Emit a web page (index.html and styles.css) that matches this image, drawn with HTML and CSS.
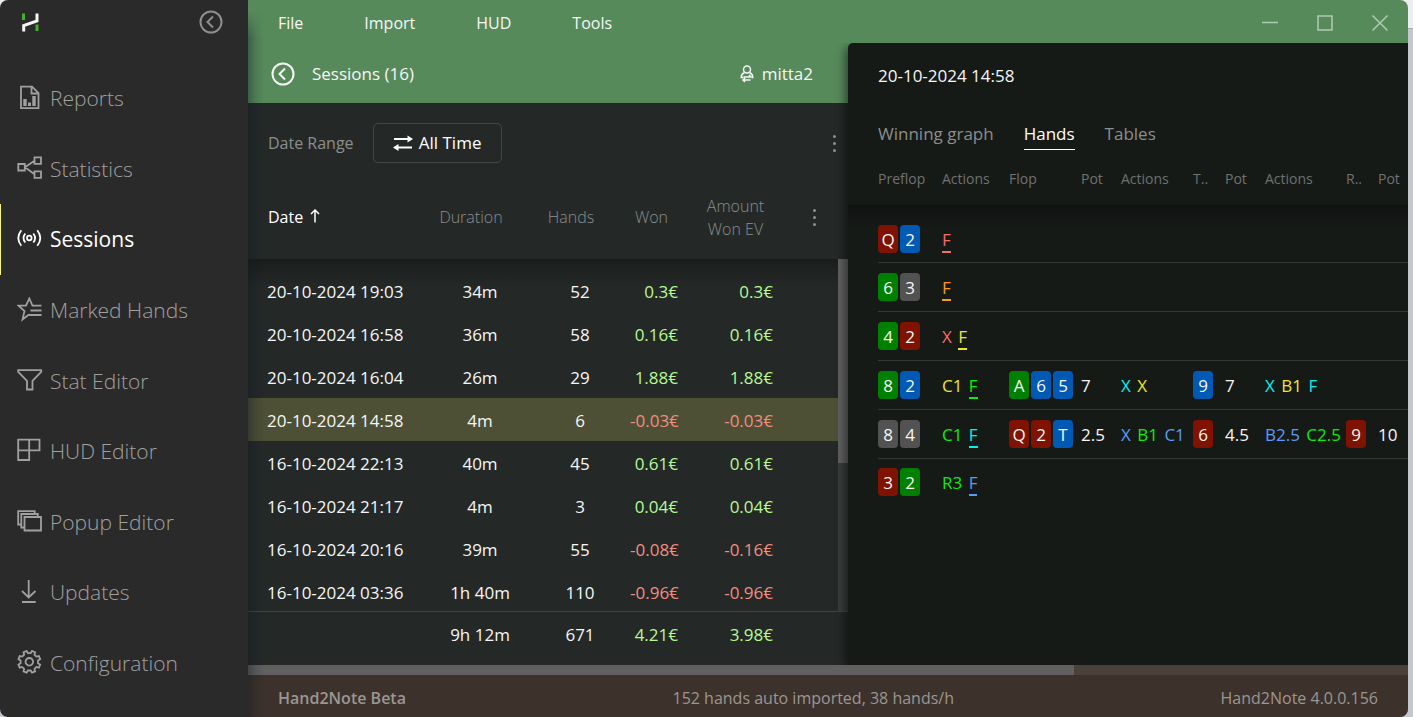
FILE: index.html
```html
<!DOCTYPE html>
<html lang="en">
<head>
<meta charset="utf-8">
<title>Hand2Note</title>
<link rel="stylesheet" href="styles.css">
</head>
<body>
<div class="app">
  <aside class="sidebar">
    <div class="brand">
      <svg class="logo" viewBox="0 0 26 26" aria-hidden="true">
        <path class="logo-green" d="M5.500 4.500v6.500M19 15.500v6.500"/>
        <path class="logo-white" d="M5.700 22.500V16.500L19 12V4.500"/>
      </svg>
      <button class="icon-btn" aria-label="Collapse menu">
        <svg class="circle-icon" viewBox="0 0 24 24"><circle cx="12" cy="12" r="10.500"/><path d="M14 6.500L8.500 12l5.500 5.500"/></svg>
      </button>
    </div>
    <nav class="nav">
      <a class="nav-item" href="#reports"><svg viewBox="0 0 26 26"><path d="M4 1.700h11l6.500 6.500V23.200H4zM14.500 2v6.500h7"/><path class="fill" d="M6.300 14h3.400v7H6.300zM11 17.500h3V21h-3zM15.300 11h3.400v10h-3.400z"/></svg>Reports</a>
      <a class="nav-item" href="#statistics"><svg viewBox="0 0 26 26"><path d="M1.300 8h6.500v6.500H1.300zM17.500 1.300H24v6.500h-6.500zM17.500 15.300H24v6.500h-6.500zM8 11.300l9.500-6.500M8 11.300l9.500 7"/></svg>Statistics</a>
      <a class="nav-item active" href="#sessions"><svg viewBox="0 0 26 26"><circle cx="12.300" cy="12" r="2.300"/><path d="M8.300 7.500q-3.600 4.500 0 9M16.300 7.500q3.600 4.500 0 9M4.300 4.200q-6 7.800 0 15.600M20.300 4.200q6 7.800 0 15.600"/></svg>Sessions</a>
      <a class="nav-item" href="#marked"><svg viewBox="0 0 26 26"><path d="M24.500 8.700h-9L12.300 1.500 9 8.700H1.500l6 5.300-2 8.500 6.500-5M13.500 13.500h11M12 18h12.500"/></svg>Marked Hands</a>
      <a class="nav-item" href="#stat-editor"><svg viewBox="0 0 26 26"><path d="M1.200 2.200h23v1.800l-8.700 8.800v8.700H10v-8.700L1.200 4z"/></svg>Stat Editor</a>
      <a class="nav-item" href="#hud-editor"><svg viewBox="0 0 26 26"><path d="M1.200 1.700H22.500v10.600H1.200zM1.200 12.300V22h11V1.700"/></svg>HUD Editor</a>
      <a class="nav-item" href="#popup-editor"><svg viewBox="0 0 26 26"><path d="M7.500 8h16.500v13.500H7.500zM7.500 18.500H4.300V5h16.500v3M4.300 15.500H1.200V2.200h16.500V5"/></svg>Popup Editor</a>
      <a class="nav-item" href="#updates"><svg viewBox="0 0 26 26"><path d="M11.700 1v17M5 12l6.700 6.500L18.500 12M5 23h13.700"/></svg>Updates</a>
      <a class="nav-item" href="#configuration"><svg viewBox="0 0 26 26"><g transform="translate(12.300 11.800)"><circle r="3.800"/><path d="M8.690 1.380L10.870 2.710 9.600 5.770 7.120 5.170 5.170 7.120 5.770 9.600 2.710 10.870 1.380 8.690H-1.380L-2.710 10.870-5.770 9.600-5.170 7.120-7.120 5.170-9.600 5.770-10.870 2.710-8.690 1.380V-1.380L-10.870-2.710-9.600-5.770-7.120-5.170-5.170-7.120-5.770-9.600-2.710-10.870-1.380-8.690H1.380L2.710-10.870 5.770-9.600 5.170-7.120 7.120-5.170 9.600-5.770 10.870-2.710 8.690-1.380z"/></g></svg>Configuration</a>
    </nav>
  </aside>

  <main class="main">
    <header class="titlebar">
      <button class="menu-btn">File</button>
      <button class="menu-btn">Import</button>
      <button class="menu-btn">HUD</button>
      <button class="menu-btn">Tools</button>
      <div class="window-controls">
        <button class="icon-btn" aria-label="Minimize"><svg viewBox="0 0 16 16"><path d="M0 7.500h16"/></svg></button>
        <button class="icon-btn" aria-label="Maximize"><svg viewBox="0 0 16 16"><path d="M1 1h14v14H1z"/></svg></button>
        <button class="icon-btn" aria-label="Close"><svg viewBox="0 0 16 16"><path d="M.5.5l15 15M15.500.5l-15 15"/></svg></button>
      </div>
    </header>

    <div class="workspace">
      <section class="sessions">
        <div class="subheader">
          <button class="icon-btn" aria-label="Back">
            <svg class="circle-icon" viewBox="0 0 24 24"><circle cx="12" cy="12" r="10.500"/><path d="M14 6.500L8.500 12l5.500 5.500"/></svg>
          </button>
          <h1 class="title">Sessions (16)</h1>
          <button class="player">
            <svg viewBox="0 0 14 18"><circle cx="7" cy="4.500" r="3.500"/><path d="M4.500 7.500Q1.200 9 1.200 12.500h2M9.500 7.500q3.300 1.500 3.300 5h-1.500M3.500 12h7.500M9 10l2 2M10.500 15H3M5 13l-2 2 2 2"/></svg>
            mitta2
          </button>
        </div>
        <div class="filters">
          <span class="filter-label">Date Range</span>
          <button class="range-btn">
            <svg viewBox="0 0 20 16"><path d="M1 4h15M4 12.500h15"/><path class="arrow" d="M14.500 0.500L20 4l-5.500 3.500zM5.500 9L0 12.500 5.500 16z"/></svg>
            All Time
          </button>
          <button class="dots" aria-label="Filter options"><i></i><i></i><i></i></button>
        </div>
        <table class="grid grid-head">
          <colgroup><col class="c-date"><col class="c-num"><col class="c-num"><col class="c-won"><col class="c-ev"><col></colgroup>
          <thead><tr>
            <th class="sorted">Date <svg viewBox="0 0 10 14"><path d="M5 13.500V1M1 5l4-4 4 4"/></svg></th>
            <th>Duration</th><th>Hands</th><th>Won</th><th>Amount<br>Won EV</th>
            <th><button class="dots" aria-label="Columns"><i></i><i></i><i></i></button></th>
          </tr></thead>
        </table>
        <div class="scroller">
          <table class="grid grid-body">
            <colgroup><col class="c-date"><col class="c-num"><col class="c-num"><col class="c-won"><col class="c-ev"><col></colgroup>
            <tbody>
              <tr><td>20-10-2024 19:03</td><td>34m</td><td>52</td><td class="pos">0.3€</td><td class="pos">0.3€</td><td></td></tr>
              <tr><td>20-10-2024 16:58</td><td>36m</td><td>58</td><td class="pos">0.16€</td><td class="pos">0.16€</td><td></td></tr>
              <tr><td>20-10-2024 16:04</td><td>26m</td><td>29</td><td class="pos">1.88€</td><td class="pos">1.88€</td><td></td></tr>
              <tr class="selected"><td>20-10-2024 14:58</td><td>4m</td><td>6</td><td class="neg">-0.03€</td><td class="neg">-0.03€</td><td></td></tr>
              <tr><td>16-10-2024 22:13</td><td>40m</td><td>45</td><td class="pos">0.61€</td><td class="pos">0.61€</td><td></td></tr>
              <tr><td>16-10-2024 21:17</td><td>4m</td><td>3</td><td class="pos">0.04€</td><td class="pos">0.04€</td><td></td></tr>
              <tr><td>16-10-2024 20:16</td><td>39m</td><td>55</td><td class="neg">-0.08€</td><td class="neg">-0.16€</td><td></td></tr>
              <tr><td>16-10-2024 03:36</td><td>1h 40m</td><td>110</td><td class="neg">-0.96€</td><td class="neg">-0.96€</td><td></td></tr>
            </tbody>
          </table>
          <div class="vbar"><div class="vthumb"></div></div>
        </div>
        <div class="totals">
          <table class="grid">
            <colgroup><col class="c-date"><col class="c-num"><col class="c-num"><col class="c-won"><col class="c-ev"><col></colgroup>
            <tbody><tr><td></td><td>9h 12m</td><td>671</td><td class="pos">4.21€</td><td class="pos">3.98€</td><td></td></tr></tbody>
          </table>
        </div>
      </section>

      <section class="detail">
        <h2 class="title">20-10-2024 14:58</h2>
        <div class="tabs">
          <button class="tab">Winning graph</button>
          <button class="tab current">Hands</button>
          <button class="tab">Tables</button>
        </div>
        <table class="hands hands-head">
          <colgroup><col class="h-pre"><col class="h-act"><col class="h-flop"><col class="h-pot"><col class="h-flop"><col class="h-card"><col class="h-pot"><col class="h-turn"><col class="h-card"><col></colgroup>
          <thead><tr><th>Preflop</th><th>Actions</th><th>Flop</th><th>Pot</th><th>Actions</th><th>T..</th><th>Pot</th><th>Actions</th><th>R..</th><th>Pot</th></tr></thead>
        </table>
        <div class="hands-list">
          <table class="hands hands-body">
            <colgroup><col class="h-pre"><col class="h-act"><col class="h-flop"><col class="h-pot"><col class="h-flop"><col class="h-card"><col class="h-pot"><col class="h-turn"><col class="h-card"><col></colgroup>
            <tbody>
              <tr><td><b class="card h">Q</b><b class="card d">2</b></td><td><u class="sb">F</u></td><td></td><td></td><td></td><td></td><td></td><td></td><td></td><td></td></tr>
              <tr><td><b class="card c">6</b><b class="card s">3</b></td><td><u class="ut">F</u></td><td></td><td></td><td></td><td></td><td></td><td></td><td></td><td></td></tr>
              <tr><td><b class="card c">4</b><b class="card h">2</b></td><td><span class="sb">X</span> <u class="mp">F</u></td><td></td><td></td><td></td><td></td><td></td><td></td><td></td><td></td></tr>
              <tr><td><b class="card c">8</b><b class="card d">2</b></td><td><span class="mp">C1</span> <u class="co">F</u></td><td><b class="card c">A</b><b class="card d">6</b><b class="card d">5</b></td><td>7</td><td><span class="bt">X</span> <span class="mp">X</span></td><td><b class="card d">9</b></td><td>7</td><td><span class="bt">X</span> <span class="mp">B1</span> <span class="bt">F</span></td><td></td><td></td></tr>
              <tr><td><b class="card s">8</b><b class="card s">4</b></td><td><span class="co">C1</span> <u class="bt">F</u></td><td><b class="card h">Q</b><b class="card h">2</b><b class="card d">T</b></td><td>2.5</td><td><span class="bb">X</span> <span class="co">B1</span> <span class="bb">C1</span></td><td><b class="card h">6</b></td><td>4.5</td><td><span class="bb">B2.5</span> <span class="co">C2.5</span></td><td><b class="card h">9</b></td><td>10</td></tr>
              <tr><td><b class="card h">3</b><b class="card c">2</b></td><td><span class="co">R3</span> <u class="bb">F</u></td><td></td><td></td><td></td><td></td><td></td><td></td><td></td><td></td></tr>
            </tbody>
          </table>
        </div>
      </section>
    </div>

    <div class="hbar"><div class="hthumb"></div></div>
    <footer class="status">
      <strong>Hand2Note Beta</strong>
      <span>152 hands auto imported, 38 hands/h</span>
      <span class="version">Hand2Note 4.0.0.156</span>
    </footer>
  </main>
</div>
</body>
</html>
```
FILE: styles.css
```css
* { box-sizing: border-box; }
body {
  margin: 0;
  padding-right: 5px;
  background: linear-gradient(#eceef2 28px, #aaa 28px, #aaa 29px, #c4c7cb 29px);
  font: 17px/22px "Open Sans", "Noto Sans", sans-serif;
  color: #f6f6f6;
}
button {
  margin: 0; padding: 0; border: 0; background: none;
  font: inherit; color: inherit; cursor: pointer;
}
svg { fill: none; stroke: currentColor; display: block; }
h1, h2 { margin: 0; font-size: 17px; font-weight: 400; }
.icon-btn { display: flex; }

.app {
  display: grid;
  grid-template-columns: 248px minmax(0, 1fr);
  grid-template-rows: minmax(0, 1fr);
  height: 100vh;
  border-radius: 8px;
  overflow: hidden;
}

/* Sidebar */
.sidebar {
  display: flex; flex-direction: column;
  padding-bottom: 19px;
  background: #2a2a2a;
  color: #8e8e8e;
}
.brand {
  display: flex; justify-content: space-between; align-items: center;
  height: 63px;
  padding: 0 25px 20px 18px;
}
.logo { width: 26px; height: 26px; stroke-width: 3; }
.logo-green { stroke: #42b02a; }
.logo-white { stroke: #f4f4f4; }
.circle-icon { width: 24px; height: 24px; stroke-width: 2; }
.nav { flex: 1; display: flex; flex-direction: column; }
.nav-item {
  flex: 1;
  display: flex; align-items: center; gap: 7px;
  padding-left: 16px;
  border-left: 1px solid transparent;
  color: #a0a0a0;
  font-size: 21px; font-weight: 300;
  text-decoration: none;
}
.nav-item svg { width: 26px; height: 26px; stroke-width: 1.800; }
.nav-item .fill { fill: currentColor; stroke: none; }
.nav-item.active { border-color: #f7f56a; color: #fff; font-weight: 400; }

/* Main column */
.main {
  position: relative;
  display: flex; flex-direction: column;
  background: #578a5b;
}
.main::before {
  content: ""; position: absolute; z-index: 2;
  left: 0; top: 10px; bottom: 0; width: 16px;
  background: linear-gradient(90deg, #10182460, #10182420 50%, #10182400);
  mask-image: linear-gradient(transparent, #000 28px);
  pointer-events: none;
}
.titlebar {
  display: flex; align-items: center; gap: 61px;
  height: 43px;
  padding: 2px 20px 0 30px;
  font-size: 16px;
}
.window-controls { display: flex; gap: 39px; margin-left: auto; color: #b0cbb2; }
.window-controls svg { width: 16px; height: 16px; stroke-width: 1.500; }
.workspace {
  flex: 1; min-height: 0;
  display: grid;
  grid-template-columns: 15fr 14fr;
  grid-template-rows: minmax(0, 1fr);
  background: linear-gradient(#578a5b 60px, #242928 60px);
}

/* Sessions */
.sessions { display: flex; flex-direction: column; min-width: 0; min-height: 0; background: #242928; }
.subheader {
  display: flex; align-items: center; gap: 17px;
  height: 60px;
  padding: 2px 35px 0 23px;
  background: #578a5b;
}
.player { display: flex; align-items: center; gap: 8px; margin-left: auto; }
.player svg { width: 14px; height: 18px; stroke-width: 1.500; }
.filters {
  display: flex; align-items: center; gap: 19px;
  height: 82px;
  padding: 0 10px 2px 20px;
}
.filter-label { color: #8b8e8c; font-size: 16px; }
.range-btn {
  display: flex; align-items: center; justify-content: center; gap: 6px;
  width: 129px; height: 40px;
  border: 1px solid #434846; border-radius: 5px;
  color: #fff;
}
.range-btn svg { width: 20px; height: 16px; stroke-width: 2; }
.range-btn .arrow { fill: currentColor; stroke: none; }
.dots { display: flex; flex-direction: column; gap: 4px; color: #8f9190; }
.dots i { width: 3px; height: 3px; border-radius: 50%; background: currentColor; }
.filters .dots { margin-left: auto; margin-right: 2px; }

.grid { width: calc(100% - 10px); table-layout: fixed; border-collapse: collapse; }
.c-date { width: 182px; }
.c-num { width: 100px; }
.c-won { width: 58px; }
.c-ev { width: 95px; }
.grid th { height: 74px; padding: 0 18px 9px 0; font-size: 16px; line-height: 23px; font-weight: 300; color: #8b8e8c; text-align: center; }
.grid th.sorted { padding-left: 20px; color: #fff; font-weight: 400; text-align: left; }
.sorted svg { display: inline; width: 10px; height: 14px; margin-left: 3px; stroke-width: 1.500; }
.grid th:nth-child(4) { text-align: right; padding-right: 20px; }
.grid th:nth-child(5) { padding-right: 0; }
.grid th:nth-child(6) { padding-left: 30px; }
.grid td { height: 43px; padding: 2px 0 0; text-align: center; white-space: nowrap; }
.grid td:first-child { padding-left: 19px; text-align: left; }
.grid td:nth-child(4), .grid td:nth-child(5) { padding-right: 10px; text-align: right; }
.pos { color: #b8f993; }
.neg { color: #f28d7f; }
.selected { background: #4d5035; }

.scroller {
  position: relative;
  flex: 1; min-height: 0;
  display: flex; align-items: flex-start;
  padding-top: 10px;
  background: linear-gradient(#1a1d1b, #242928 28px);
  overflow: hidden;
}
.vbar { position: absolute; top: 0; right: 0; bottom: 0; width: 10px; background: #383c3b; }
.vthumb { height: 58%; background: #5f6060; }
.totals { height: 54px; border-top: 1px solid #414645; }

/* Session detail */
.detail {
  z-index: 1;
  min-width: 0;
  padding-top: 22px;
  border-radius: 5px 0 0 5px;
  background: #161a17;
  box-shadow: -3px 4px 10px #00000080;
  overflow: hidden;
  clip-path: inset(0 0 0 -16px);
}
.detail .title { padding-left: 30px; }
.tabs { display: flex; gap: 30px; margin-top: 35px; padding-left: 30px; color: #8c8e8d; }
.tab { height: 28px; padding-bottom: 4px; border-bottom: 1px solid transparent; }
.tab.current { border-color: #fff; color: #fff; }
.hands { width: calc(100% - 30px); margin-left: 30px; table-layout: fixed; border-collapse: collapse; }
.h-pre { width: 64px; }
.h-act { width: 67px; }
.h-flop { width: 72px; }
.h-pot { width: 40px; }
.h-card { width: 32px; }
.h-turn { width: 81px; }
.hands th { height: 55px; padding: 2px 0 0; font-size: 14px; font-weight: 400; color: #6f7170; text-align: left; white-space: nowrap; }
.hands-list { padding-top: 10px; background: linear-gradient(#101211, #161a17 24px); }
.hands-body { height: 291px; }
.hands-body tr + tr { border-top: 1px solid #333735; }
.hands td { padding: 2px 0 0; white-space: nowrap; }
.hands td:has(.card) { padding: 0; }
.hands span + * { margin-left: 2px; }
.card {
  display: inline-block;
  width: 20px; height: 28px;
  margin-right: 2px;
  border-radius: 4px;
  font-weight: 400; line-height: 30px; text-align: center;
  vertical-align: middle;
}
.card.h { background: #7f1200; }
.card.d { background: #0059b3; }
.card.c { background: #008000; }
.card.s { background: #525252; }
.hands u { border-bottom: 2px solid; text-decoration: none; }
.sb { color: #f66b6b; }
.ut { color: #f99a1c; }
.mp { color: #eae72c; }
.co { color: #08ee08; }
.bt { color: #08efef; }
.bb { color: #5c9bf5; }

/* Bottom */
.hbar { height: 10px; background: #4c4139; }
.hthumb { width: 71.200%; height: 100%; background: #606060; }
.status {
  display: flex; justify-content: space-between; align-items: center;
  height: 42px;
  padding: 3px 30px 0;
  background: #3d322b;
  color: #9b9692;
  font-size: 16px;
}
.status strong { font-weight: 600; }
```
